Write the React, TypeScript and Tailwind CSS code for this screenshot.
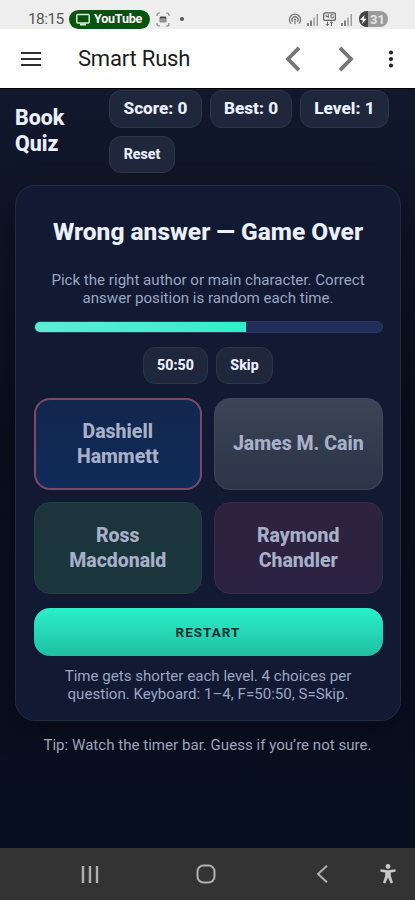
import type { ReactNode } from "react";
import clsx from "clsx";

const answers = [
    { lines: ["Dashiell", "Hammett"], className: "border-2 border-[#7c4a66] bg-linear-to-b from-[#13264d] to-[#0f2b5a]" },
    { lines: ["James M. Cain"], className: "border border-[#3e495c] bg-linear-to-b from-[#3b4557] to-[#2b3448]" },
    { lines: ["Ross", "Macdonald"], className: "border border-[#21403f] bg-linear-to-b from-[#1c343b] to-[#1a363c]" },
    { lines: ["Raymond", "Chandler"], className: "border border-[#372946] bg-linear-to-b from-[#2e233e] to-[#2b2142]" },
];

function Chip({ children, className }: { children: ReactNode; className?: string }) {
    return (
        <div
            className={clsx(
                "flex shrink-0 items-center justify-center whitespace-nowrap rounded-xl border border-[#2c354a] bg-[#1f273d] font-extrabold text-[#eaf0ff]",
                className
            )}
        >
            {children}
        </div>
    );
}

function Signal() {
    return (
        <svg width="12" height="13" viewBox="0 0 12 13" fill="#808080">
            <path d="M0 10h2v3H0z" />
            <path d="M3 7.5h2V13H3z" />
            <path d="M6.3 4.5h1.5V13H6.3z" opacity=".75" />
            <path d="M9.5 1H11v12H9.5z" opacity=".75" />
        </svg>
    );
}

function StatusBar() {
    return (
        <div className="flex h-[29px] items-end bg-[#eeeeee] pl-7 pr-[27px] text-[#555]">
            <span className="w-[41px] whitespace-nowrap pb-px text-[15.5px] leading-[17px] tracking-[-0.6px]">18:15</span>
            <div className="flex h-[19px] w-[81px] items-center rounded-full bg-[#08530f] pl-[7px] text-white">
                <svg width="14" height="13" viewBox="0 0 14 13" fill="none" stroke="#d7ecd7" strokeWidth="1.5">
                    <rect x=".8" y="1.5" width="12.4" height="8.5" rx="1" />
                    <path d="M4 11.5h6" strokeWidth="2" />
                </svg>
                <span className="ml-1 text-[12.5px] font-bold leading-none tracking-[-0.2px]">YouTube</span>
            </div>
            <svg className="mb-[2px] ml-[6px]" width="14" height="15" viewBox="0 0 14 15" fill="none" stroke="#888" strokeWidth="1.2">
                <path d="M1 4V3a2 2 0 0 1 2-2h1M10 1h1a2 2 0 0 1 2 2v1M13 11v1a2 2 0 0 1-2 2h-1M4 14H3a2 2 0 0 1-2-2v-1" />
                <rect x="4" y="5" width="6" height="5" rx="1" fill="#999" />
                <path d="M4 5.5h6" stroke="#444" strokeWidth="1.5" />
            </svg>
            <div className="mb-[8px] ml-[10px] size-[4px] rounded-full bg-[#555]" />
            <div className="ml-auto flex items-center gap-[5px] pb-[2px]">
                <svg width="14" height="14" viewBox="0 0 15 14" fill="none" stroke="#777" strokeWidth="1.4">
                    <path d="M3.2 12a6 6 0 1 1 8.6 0" />
                    <path d="M5.2 10a3.2 3.2 0 1 1 4.6 0" />
                    <circle cx="7.5" cy="7.5" r="1.1" fill="#666" stroke="none" />
                    <path d="M7.5 9v3.5" strokeWidth="1.2" />
                </svg>
                <Signal />
                <svg className="-ml-px" width="13" height="15" viewBox="0 0 13 15" fill="none" stroke="#666">
                    <rect x=".6" y=".8" width="11.8" height="7.5" rx="1.5" strokeWidth="1.3" />
                    <path d="M3 2.5v2h2.5M5.3 2.3V6M10.5 2.8H8v3h2.5V4.5" />
                    <path d="M4.5 9.5v4M3 12l1.500 1.800L6 12M8.500 14v-4M7 11.300l1.500-1.600 1.500 1.600" />
                </svg>
                <Signal />
                <div className="ml-px flex h-4 w-[29px] items-center overflow-hidden rounded-full bg-[#9b9b9b]">
                    <div className="flex h-4 w-[9px] items-center justify-center bg-[#444]">
                        <svg width="7" height="9" viewBox="0 0 7 9" fill="white">
                            <path d="M4.5 0 0 5h2.800L2 9l4.700-5.300H3.800z" />
                        </svg>
                    </div>
                    <span className="ml-[2px] text-[13px] font-bold leading-none text-[#e4e4e4]">31</span>
                </div>
            </div>
        </div>
    );
}

function AppHeader() {
    return (
        <header className="flex h-[59px] items-center bg-white">
            <svg className="ml-[21px]" width="20" height="14" viewBox="0 0 20 14" stroke="#303030" strokeWidth="2">
                <path d="M0 1h20M0 7h20M0 13h20" />
            </svg>
            <h1 className="ml-[37px] whitespace-nowrap text-[22px] leading-none tracking-[-0.2px] text-[#1b1b1b]">Smart Rush</h1>
            <svg className="ml-auto" width="16" height="26" viewBox="0 0 16 26" fill="none" stroke="#757575" strokeWidth="3.8">
                <path d="M14 1.8 3 13l11 11.2" />
            </svg>
            <svg className="ml-[37px]" width="16" height="26" viewBox="0 0 16 26" fill="none" stroke="#757575" strokeWidth="3.8">
                <path d="m2 1.8 11 11.2L2 24.2" />
            </svg>
            <svg className="ml-[34px] mr-[21px]" width="6" height="18" viewBox="0 0 6 18" fill="#222">
                <circle cx="3" cy="2.5" r="2.1" />
                <circle cx="3" cy="9" r="2.1" />
                <circle cx="3" cy="15.5" r="2.1" />
            </svg>
        </header>
    );
}

function NavBar() {
    return (
        <nav className="flex h-[52px] items-center bg-[#333333] text-[#b0b0b0]">
            <svg className="ml-[81px]" width="18" height="17" viewBox="0 0 18 17" stroke="currentColor" strokeWidth="2.4">
                <path d="M2 0v17M9 0v17M16 0v17" />
            </svg>
            <svg className="ml-[97px]" width="20" height="20" viewBox="0 0 20 20" fill="none" stroke="currentColor" strokeWidth="2">
                <rect x="1.5" y="1.5" width="17" height="17" rx="6" />
            </svg>
            <svg className="ml-[100px]" width="12" height="18" viewBox="0 0 12 18" fill="none" stroke="currentColor" strokeWidth="2">
                <path d="M11 .8 2 9l9 8.2" />
            </svg>
            <svg className="ml-[52px] text-[#c8c8c8]" width="16" height="20" viewBox="0 0 16 20" fill="currentColor">
                <circle cx="8" cy="2.5" r="2.4" />
                <path d="M.5 5.300 8 6.200l7.500-.9v2.400l-4.700.9v3.200l2.200 7-2.300.7L8 13.500l-2.700 6-2.300-.7 2.200-7V8.600l-4.700-.9z" />
            </svg>
        </nav>
    );
}

export default function App() {
    return (
        <div className="flex h-[900px] w-[415px] flex-col overflow-hidden font-[Roboto,sans-serif]">
            <StatusBar />
            <AppHeader />
            <main className="flex-1 border-t border-black bg-linear-to-b from-[#12182d] via-[#090e1d] via-45% to-[#080f20] px-[15px] pt-px">
                <div className="flex">
                    <h2 className="w-[94px] pt-[15px] text-[21.4px] font-extrabold leading-[25.5px] text-[#eaf0ff]">
                        Book
                        <br />
                        Quiz
                    </h2>
                    <div className="flex w-[285px] flex-wrap gap-2">
                        <Chip className="h-[38px] w-[93px] text-[17.2px]">Score: 0</Chip>
                        <Chip className="h-[38px] w-[82px] text-[17.2px]">Best: 0</Chip>
                        <Chip className="h-[38px] w-[89px] text-[17.2px]">Level: 1</Chip>
                        <Chip className="h-[37px] w-[66px] text-[14.2px]">Reset</Chip>
                    </div>
                </div>

                <section className="mt-3 h-[536px] w-[386px] rounded-[20px] border border-[#212b42] bg-[#111a32] px-[17.5px] text-center shadow-[0_10px_30px_rgba(0,0,0,0.35)]">
                    <h3 className="whitespace-nowrap pt-[31px] text-[24.5px] font-extrabold leading-[30px] text-[#eaf0ff]">
                        Wrong answer — Game Over
                    </h3>
                    <p className="mt-[24px] whitespace-nowrap text-[15.1px] leading-[18px] text-[#9ca5c2]">
                        Pick the right author or main character. Correct
                        <br />
                        answer position is random each time.
                    </p>
                    <div className="mt-[14px] h-[12px] overflow-hidden rounded-full border border-[#2a3760] bg-[#1f2d58]">
                        <div className="h-full w-[211px] bg-linear-to-r from-[#5eead4] to-[#2af0c8]" />
                    </div>
                    <div className="mt-[14px] flex justify-center gap-2">
                        <Chip className="h-[37px] w-[65px] text-[14.2px]">50:50</Chip>
                        <Chip className="h-[37px] w-[57px] text-[14.2px]">Skip</Chip>
                    </div>
                    <div className="mt-[14px] grid grid-cols-2 gap-x-[12px] gap-y-[12px]">
                        {answers.map((a) => (
                            <button
                                key={a.lines[0]}
                                className={clsx(
                                    "flex h-[92px] flex-col items-center justify-center whitespace-nowrap rounded-2xl pb-px text-[19.5px] font-extrabold leading-[25px] text-[#a7b0c8]",
                                    a.className
                                )}
                            >
                                {a.lines.map((line) => (
                                    <span key={line}>{line}</span>
                                ))}
                            </button>
                        ))}
                    </div>
                    <button className="mt-[14px] h-[48px] w-full rounded-2xl bg-linear-to-b from-[#2bf0c9] to-[#20bfa4] text-[13.5px] font-bold tracking-[1px] text-[#08312f]">
                        RESTART
                    </button>
                    <p className="mt-[11px] whitespace-nowrap text-[15.1px] leading-[18px] text-[#9ca5c2]">
                        Time gets shorter each level. 4 choices per
                        <br />
                        question. Keyboard: 1–4, F=50:50, S=Skip.
                    </p>
                </section>
                <p className="mt-[15px] whitespace-nowrap text-center text-[15.1px] leading-[18px] text-[#9da4ba]">
                    Tip: Watch the timer bar. Guess if you’re not sure.
                </p>
            </main>
            <NavBar />
        </div>
    );
}
